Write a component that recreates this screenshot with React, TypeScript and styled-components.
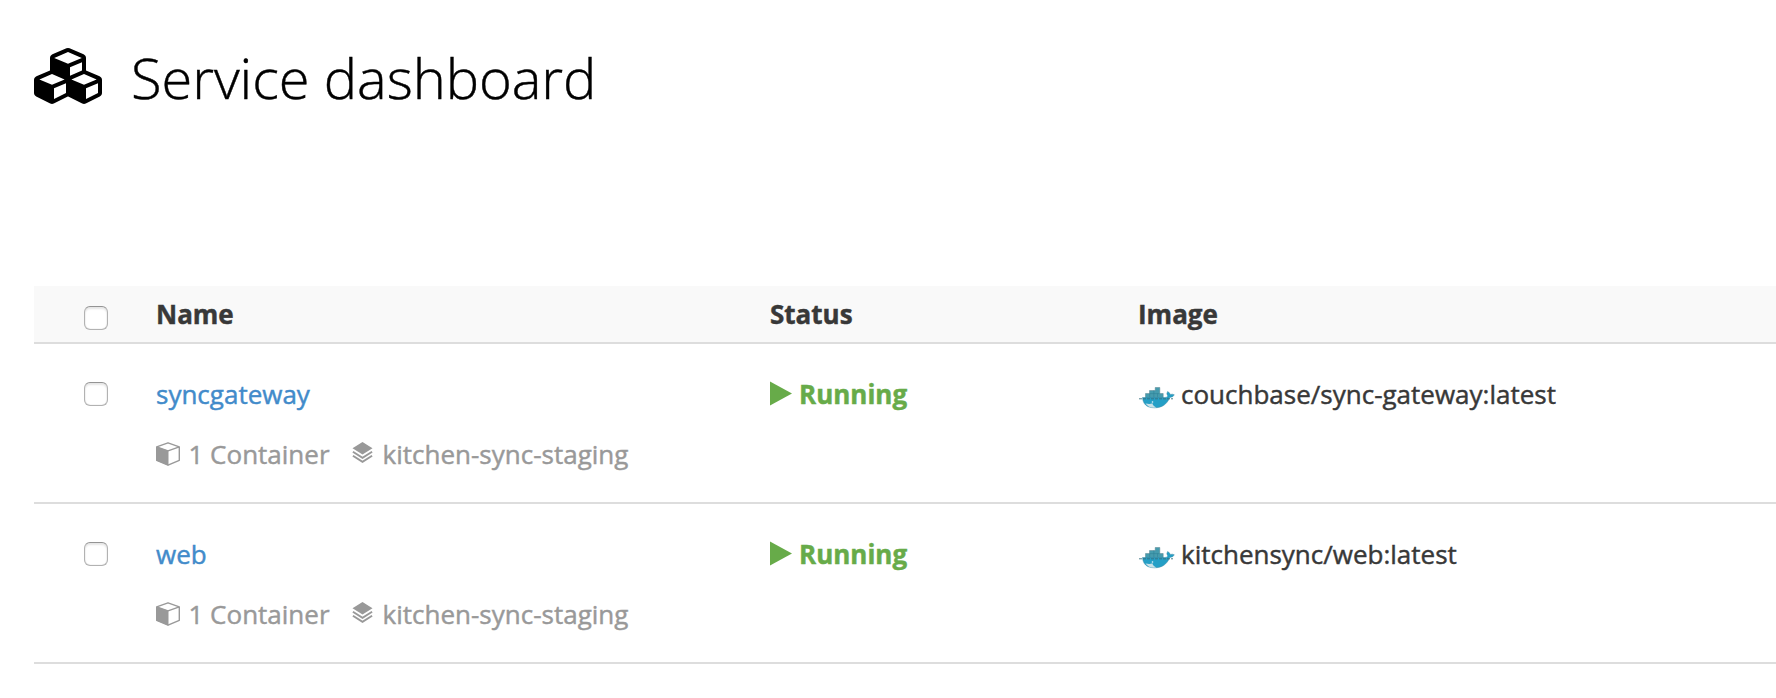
import React from "react";
import styled, { createGlobalStyle } from "styled-components";

const GlobalStyle = createGlobalStyle`
  *, *::before, *::after { box-sizing: border-box; }
  body {
    margin: 0;
    background: #fff;
    color: #383838;
    font: 400 26px/36px "Open Sans", sans-serif;
    -webkit-text-stroke: 0.45px currentColor;
    overflow: hidden;
  }
`;

const Page = styled.main`
  height: 698px;
  padding: 48px 0 0 34px;
  overflow: hidden;
`;

const PageHeader = styled.header`
  display: flex;
  align-items: flex-start;
  height: 64px;
  margin-bottom: 174px;
  color: #000;
`;

const CubesSvg = styled.svg`
  display: block;
  width: 68px;
  height: 56px;
  margin-right: 29px;
  fill: currentColor;
`;

const Title = styled.h1`
  margin: 0;
  font-size: 56px;
  font-weight: 300;
  line-height: 58px;
  letter-spacing: -0.07px;
  white-space: nowrap;
`;

const Table = styled.section`
  display: flex;
  flex-direction: column;
`;

const Row = styled.div`
  display: grid;
  grid-template-columns: 122px 614px 368px 1fr;
  height: 160px;
  padding-top: 32px;
  border-bottom: 2px solid #ddd;
`;

const HeadRow = styled(Row)`
  height: 58px;
  padding-top: 10px;
  background: #f9f9f9;
  font-weight: 700;
`;

const CheckCell = styled.div<{ $offset: number }>`
  padding: ${(p) => p.$offset}px 0 0 50px;
`;

const Checkbox = styled.input.attrs({ type: "checkbox" })`
  appearance: none;
  display: block;
  width: 24px;
  height: 24px;
  margin: 0;
  border: 1px solid #b2b2b2;
  border-top-color: #949494;
  border-radius: 6px;
  background: #fff;
  box-shadow: inset 0 2px 2px #e6e6e6, inset 0 0 1px #aaa;
`;

const NameCell = styled.div`
  display: flex;
  flex-direction: column;
  align-items: flex-start;
  gap: 24px;
`;

const ServiceLink = styled.a`
  color: #428bca;
  text-decoration: none;
`;

const Meta = styled.div`
  display: flex;
  gap: 22px;
  color: #999;
`;

const MetaItem = styled.span<{ $gap: number }>`
  display: flex;
  gap: ${(p) => p.$gap}px;
  white-space: nowrap;
`;

const CubeSvg = styled.svg`
  width: 24px;
  height: 24px;
  margin-top: 6px;
`;

const LayersSvg = styled.svg`
  width: 21px;
  height: 22px;
  margin-top: 6px;
`;

const Status = styled.div`
  display: flex;
  gap: 7px;
  color: #67ab49;
  font-weight: 700;
`;

const PlaySvg = styled.svg`
  width: 22px;
  height: 25px;
  margin-top: 5px;
  fill: currentColor;
`;

const ImageCell = styled.div`
  display: flex;
  gap: 6px;
  padding-left: 1px;
  white-space: nowrap;
`;

const WhaleSvg = styled.svg`
  width: 36px;
  height: 24px;
  margin-top: 10px;
`;

const CubesIcon = () => (
  <CubesSvg viewBox="0 0 2176 1792">
    <path d="M640 1632l384-192v-314l-384 164v342zm-64-454l404-173-404-173-404 173zm1088 454l384-192v-314l-384 164v342zm-64-454l404-173-404-173-404 173zm-448-293l384-165v-266l-384 164v267zm-64-379l441-189-441-189-441 189zm1088 518v416q0 36-19 67t-52 47l-448 224q-25 14-57 14t-57-14l-448-224q-4-2-7-4-2 2-7 4l-448 224q-25 14-57 14t-57-14l-448-224q-33-16-52-47t-19-67v-416q0-38 21.500-70t56.500-48l434-186v-400q0-38 21.500-70t56.500-48l448-192q23-10 50-10t50 10l448 192q35 16 56.500 48t21.500 70v400l434 186q36 16 57 48t21 70z" />
  </CubesSvg>
);

const CubeIcon = () => (
  <CubeSvg viewBox="0 0 24 24">
    <path
      d="M.7 4.800 12 .8l11.300 4v13.500L12 23.200.7 18.300zM.7 4.800 12 8.800l11.300-4"
      fill="none"
      stroke="currentColor"
      strokeWidth="1.400"
      strokeLinejoin="round"
    />
    <path d="M.3 4.800 12.500 8.800v14.700L.3 18.500z" fill="currentColor" />
  </CubeSvg>
);

const LayersIcon = () => (
  <LayersSvg viewBox="0 0 21 22">
    <path d="M10.500 0 20.500 6.300 10.500 12.600 .5 6.300z" fill="currentColor" />
    <path
      d="M.9 9.700 10.500 15.900 20.100 9.700M.9 13.700 10.500 19.900 20.100 13.700"
      fill="none"
      stroke="currentColor"
      strokeWidth="1.900"
    />
  </LayersSvg>
);

const PlayIcon = () => (
  <PlaySvg viewBox="0 0 22 25">
    <path d="M0 .5 22 12.500 0 24.500z" />
  </PlaySvg>
);

const WhaleIcon = () => (
  <WhaleSvg viewBox="0 0 36 24">
    <path
      d="M6.500 11.500V7.500h4V4.500h5.700V1.500h4.600v6h3.400V12H6.500z"
      fill="#459bae"
      stroke="#5b8490"
      strokeWidth=".5"
    />
    <path
      d="M10.700 7.500V12M14.800 4.500V12M18.500 7.500V12M10.500 7.600h10"
      stroke="#2c7f94"
      strokeWidth=".5"
    />
    <path
      d="M3.500 11.500h22.300q2.500 0 3-1.500-1.800-2.300-.2-4.500 2.200 1 2.700 3 2.200-.8 4 .3-1 2.500-4.500 2.700C27.800 18.500 23 21.800 15.500 21.800 7.500 21.800 4 18 3.500 11.500z"
      fill="#249fc6"
      stroke="#3c8aa4"
      strokeWidth=".5"
    />
    <path d="M6.500 17.500q4.500 1 7-.2 0 2.500 3.800 4.300Q10 22.500 6.500 17.500z" fill="#c9e1e8" />
    <path d="M0 12.800h34" stroke="#386f80" strokeWidth=".9" strokeDasharray="3 1" />
    <circle cx="13.500" cy="16" r=".8" fill="#e7f5f8" />
  </WhaleSvg>
);

const services = [
  { name: "syncgateway", containers: "1 Container", stack: "kitchen-sync-staging", status: "Running", image: "couchbase/sync-gateway:latest" },
  { name: "web", containers: "1 Container", stack: "kitchen-sync-staging", status: "Running", image: "kitchensync/web:latest" },
];

export default function App() {
  return (
    <Page>
      <GlobalStyle />
      <PageHeader>
        <CubesIcon />
        <Title>Service dashboard</Title>
      </PageHeader>
      <Table>
        <HeadRow>
          <CheckCell $offset={10}>
            <Checkbox aria-label="Select all services" />
          </CheckCell>
          <span>Name</span>
          <span>Status</span>
          <span>Image</span>
        </HeadRow>
        {services.map((s) => (
          <Row key={s.name}>
            <CheckCell $offset={6}>
              <Checkbox aria-label={`Select ${s.name}`} />
            </CheckCell>
            <NameCell>
              <ServiceLink href="#">{s.name}</ServiceLink>
              <Meta>
                <MetaItem $gap={8.5}>
                  <CubeIcon />
                  {s.containers}
                </MetaItem>
                <MetaItem $gap={10}>
                  <LayersIcon />
                  {s.stack}
                </MetaItem>
              </Meta>
            </NameCell>
            <Status>
              <PlayIcon />
              {s.status}
            </Status>
            <ImageCell>
              <WhaleIcon />
              {s.image}
            </ImageCell>
          </Row>
        ))}
      </Table>
    </Page>
  );
}
